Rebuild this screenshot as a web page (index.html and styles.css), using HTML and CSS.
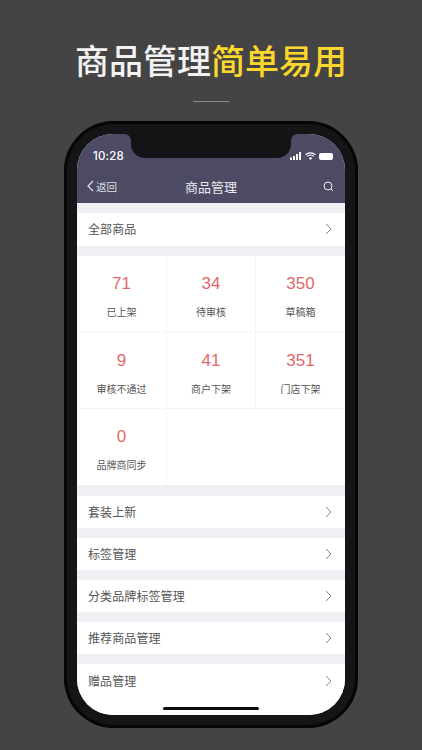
FILE: index.html
```html
<!DOCTYPE html>
<html lang="zh">
<head>
<meta charset="utf-8">
<title>商品管理</title>
<link rel="stylesheet" href="styles.css">
</head>
<body>
<h1 class="headline">商品管理<span class="accent">简单易用</span></h1>
<div class="rule"></div>
<div class="phone">
  <div class="notch"></div>
  <div class="home"></div>
  <div class="screen">
    <header class="top">
      <div class="status">
        <span class="time">10:28</span>
        <span class="sys">
          <svg width="12" height="8" viewBox="0 0 12 8"><rect x="0" y="5.5" width="2" height="2.5" fill="#fff"/><rect x="3" y="4" width="2" height="4" fill="#fff"/><rect x="6" y="2" width="2" height="6" fill="#fff"/><rect x="9" y="0" width="2" height="8" fill="#fff"/></svg>
          <svg width="11" height="8" viewBox="0 0 11 8"><path d="M.6 2.8a7 7 0 0 1 9.8 0M2.2 4.4a4.7 4.7 0 0 1 6.6 0" fill="none" stroke="#fff" stroke-width="1.2"/><path d="M5.5 8 3.8 6a2.5 2.5 0 0 1 3.4 0z" fill="#fff"/></svg>
          <span class="batt"></span>
        </span>
      </div>
      <nav class="nav">
        <span class="back">
          <svg width="7" height="12" viewBox="0 0 7 12"><path d="M6 1 1 6l5 5" fill="none" stroke="#e6e6ea" stroke-width="1.2"/></svg>返回
        </span>
        <span class="nav-title">商品管理</span>
        <svg class="search" width="11" height="11" viewBox="0 0 11 11"><circle cx="5" cy="5" r="4" fill="none" stroke="#eee" stroke-width="1"/><path d="m8 8 2 2" stroke="#eee" stroke-width="1"/></svg>
      </nav>
    </header>
    <div class="row first"><span>全部商品</span><svg class="chev" width="7" height="12" viewBox="0 0 7 12"><path d="m1 1 5 5-5 5" fill="none" stroke="#888" stroke-width="1"/></svg></div>
    <section class="grid">
      <div class="cell"><b>71</b><span>已上架</span></div>
      <div class="cell"><b>34</b><span>待审核</span></div>
      <div class="cell"><b>350</b><span>草稿箱</span></div>
      <div class="cell"><b>9</b><span>审核不通过</span></div>
      <div class="cell"><b>41</b><span>商户下架</span></div>
      <div class="cell"><b>351</b><span>门店下架</span></div>
      <div class="cell"><b>0</b><span>品牌商同步</span></div>
    </section>
    <div class="row"><span class="lift">套装上新</span><svg class="chev" width="7" height="12" viewBox="0 0 7 12"><path d="m1 1 5 5-5 5" fill="none" stroke="#888" stroke-width="1"/></svg></div>
    <div class="row"><span class="lift">标签管理</span><svg class="chev" width="7" height="12" viewBox="0 0 7 12"><path d="m1 1 5 5-5 5" fill="none" stroke="#888" stroke-width="1"/></svg></div>
    <div class="row"><span class="lift">分类品牌标签管理</span><svg class="chev" width="7" height="12" viewBox="0 0 7 12"><path d="m1 1 5 5-5 5" fill="none" stroke="#888" stroke-width="1"/></svg></div>
    <div class="row"><span class="lift">推荐商品管理</span><svg class="chev" width="7" height="12" viewBox="0 0 7 12"><path d="m1 1 5 5-5 5" fill="none" stroke="#888" stroke-width="1"/></svg></div>
    <div class="row last"><span>赠品管理</span><svg class="chev" width="7" height="12" viewBox="0 0 7 12"><path d="m1 1 5 5-5 5" fill="none" stroke="#888" stroke-width="1"/></svg></div>
  </div>
</div>
</body>
</html>
```
FILE: styles.css
```css
* { box-sizing: border-box; }
html, body { height: 100%; }
body {
  margin: 0;
  height: 750px;
  overflow: hidden;
  background: #444444;
  font-family: "Noto Sans CJK SC", "Liberation Sans", sans-serif;
  display: flex;
  flex-direction: column;
  align-items: center;
}
.headline {
  margin: 37px 0 0;
  height: 46px;
  line-height: 46px;
  font-size: 34px;
  font-weight: 500;
  color: #f2f2f2;
  white-space: nowrap;
}
.accent { color: #fbd72e; }
.rule {
  width: 36px;
  height: 1px;
  margin-top: 18px;
  background: #8a8a8a;
}
.phone {
  position: relative;
  width: 294px;
  height: 607px;
  margin-top: 19px;
  padding: 13px;
  border-radius: 50px;
  background: #141517;
  box-shadow: inset 0 0 0 3px #060606;
  flex: none;
}
.notch {
  position: absolute;
  top: 13px;
  left: 67px;
  width: 160px;
  height: 24px;
  background: #131416;
  border-radius: 0 0 14px 14px;
}
.notch::before,
.notch::after {
  content: "";
  position: absolute;
  top: 0;
  width: 6px;
  height: 6px;
}
.notch::before {
  left: -6px;
  background: radial-gradient(circle at 0 100%, transparent 5.5px, #131416 6px);
}
.notch::after {
  right: -6px;
  background: radial-gradient(circle at 100% 100%, transparent 5.5px, #131416 6px);
}
.home {
  position: absolute;
  left: 99px;
  bottom: 18px;
  width: 96px;
  height: 3px;
  border-radius: 2px;
  background: #0c0c0c;
}
.screen {
  height: 581px;
  border-radius: 36px;
  overflow: hidden;
  background: #efeff4;
}
.top { background: #4c4b63; height: 69px; color: #fff; }
.status {
  height: 36px;
  padding: 8px 12px 0 16px;
  display: flex;
  justify-content: space-between;
  align-items: center;
}
.time {
  font-family: "Inter", "Liberation Sans", sans-serif;
  font-size: 11.5px;
  font-weight: 500;
  letter-spacing: .2px;
}
.sys { display: flex; align-items: center; gap: 3px; }
.batt { width: 14px; height: 7px; background: #fff; border-radius: 2px; }
.nav {
  height: 33px;
  padding: 0 11px 1px 10px;
  display: flex;
  align-items: center;
  justify-content: space-between;
  position: relative;
}
.back { display: flex; align-items: center; gap: 2px; font-size: 10.5px; color: #dfdfe5; }
.nav-title {
  position: absolute;
  left: 0;
  right: 0;
  text-align: center;
  font-size: 13px;
  color: #e8e8ee;
}
.search { margin-top: 1px; }
.row {
  height: 31.5px;
  margin-bottom: 10.5px;
  padding: 1px 13px 0 11px;
  background: #fff;
  display: flex;
  align-items: center;
  justify-content: space-between;
  font-size: 12px;
  color: #555;
  letter-spacing: .1px;
}
.lift { padding-bottom: 2px; }
.first { height: 32.5px; margin-top: 10px; margin-bottom: 10px; padding-top: 0; padding-bottom: 1px; }
.last { height: 60px; padding-top: 0; padding-bottom: 27px; margin-bottom: 0; }
.grid {
  display: grid;
  grid-template-columns: 90px 89px 89px;
  grid-auto-rows: 76.5px;
  height: 229.5px;
  margin-bottom: 11px;
  background: #fff;
}
.cell {
  display: flex;
  flex-direction: column;
  align-items: center;
  padding-top: 16.5px;
  border-right: 1px solid #f5f5f8;
  border-bottom: 1px solid #f5f5f8;
}
.cell:nth-child(3) { border-right: 0; }
.cell:nth-child(6) { border-right: 0; }
.cell:nth-child(7) { border-bottom: 0; }
.cell b {
  font-family: "Liberation Sans", sans-serif;
  font-weight: 400;
  font-size: 17px;
  line-height: 24px;
  color: #e2686a;
}
.cell span {
  margin-top: 8px;
  font-size: 10px;
  line-height: 16px;
  color: #555;
}
```
